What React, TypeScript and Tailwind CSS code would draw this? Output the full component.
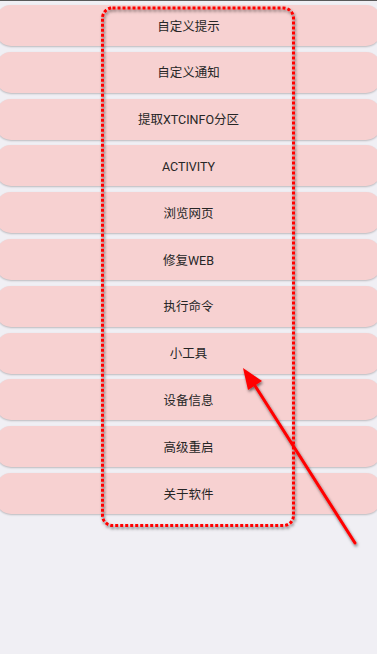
const items = [
  "自定义提示",
  "自定义通知",
  "提取XTCINFO分区",
  "ACTIVITY",
  "浏览网页",
  "修复WEB",
  "执行命令",
  "小工具",
  "设备信息",
  "高级重启",
  "关于软件",
];

export default function App() {
  return (
    <div
      className="relative h-[654px] w-[377px] overflow-hidden bg-[#f0eff4]"
      style={{ fontFamily: 'Roboto, "Noto Sans CJK SC", sans-serif' }}
    >
      <div className="h-px bg-[#5a5a5a]" />
      <div className="flex flex-col gap-[5.8px] pt-[4px]">
        {items.map((label) => (
          <button
            key={label}
            type="button"
            className="mx-[-4px] flex h-[41px] items-center justify-center rounded-[15px] bg-[#f7d1d1] pt-[3px] text-[12.5px] font-normal text-[#262626] shadow-[0_1px_2px_rgba(0,0,0,0.22)]"
          >
            {label}
          </button>
        ))}
      </div>

      {/* annotation overlay */}
      <svg
        className="pointer-events-none absolute inset-0"
        width="377"
        height="654"
        viewBox="0 0 377 654"
      >
        <defs>
          <filter id="sh" x="-20%" y="-20%" width="140%" height="140%">
            <feDropShadow dx="1" dy="2" stdDeviation="1.8" floodColor="#000" floodOpacity="0.55" />
          </filter>
        </defs>
        <g filter="url(#sh)">
          <rect
            x="102.5"
            y="8"
            width="191"
            height="517.5"
            rx="10"
            fill="none"
            stroke="#ff0000"
            strokeWidth="3"
            strokeDasharray="3 2"
          />
          <line x1="355" y1="543" x2="252" y2="381" stroke="#ff0000" strokeWidth="3" strokeLinecap="round" />
          <polygon points="243,368 248,390 262,381" fill="#ff0000" />
        </g>
      </svg>
    </div>
  );
}
